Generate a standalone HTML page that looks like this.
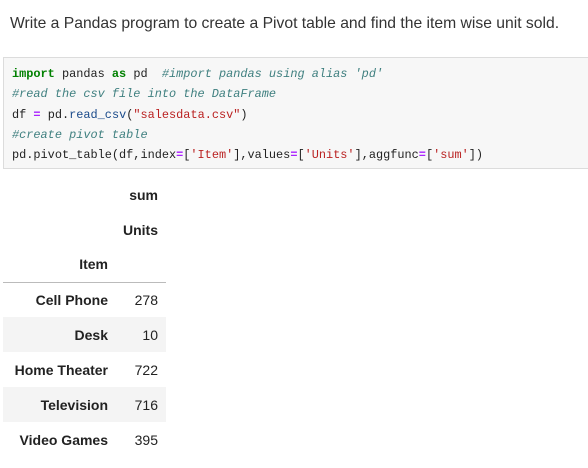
<!DOCTYPE html>
<html><head><style>
body{margin:0;width:588px;height:468px;background:#fff;font-family:"Liberation Sans",sans-serif;color:#222;overflow:hidden;position:relative}
.t{position:absolute;left:10px;top:15px;font-size:15.7px;color:#333}
.code{position:absolute;left:3px;top:57px;width:590px;height:112px;background:#f7f7f7;border:1px solid #dcdcdc;box-sizing:border-box;font-family:"Liberation Mono",monospace;font-size:11.9px;padding:6px 0 0 8px;line-height:20.3px;color:#222;white-space:pre}
.k{color:#008000;font-weight:bold}.c{color:#408080;font-style:italic}.s{color:#ba2121}.o{color:#aa22ff;font-weight:bold}.f{color:#1a4a8a}
table{position:absolute;left:3px;top:177px;border-collapse:collapse;font-size:14px}
td,th{height:35px;padding:0 8px 0 6px;text-align:right;box-sizing:border-box}
th{font-weight:bold}
tr.e td,tr.e th{background:#f4f4f4}
.b th{border-bottom:1.5px solid #bbb}
</style></head><body>
<div class="t">Write a Pandas program to create a Pivot table and find the item wise unit sold.</div>
<div class="code"><span class="k">import</span> pandas <span class="k">as</span> pd  <span class="c">#import pandas using alias 'pd'</span>
<span class="c">#read the csv file into the DataFrame</span>
df <span class="o">=</span> pd<span>.</span><span class="f">read_csv</span>(<span class="s">"salesdata.csv"</span>)
<span class="c">#create pivot table</span>
pd.pivot_table(df,index<span class="o">=</span>[<span class="s">'Item'</span>],values<span class="o">=</span>[<span class="s">'Units'</span>],aggfunc<span class="o">=</span>[<span class="s">'sum'</span>])</div>
<table>
<tr><th style="width:113px"></th><th style="width:50px">sum</th></tr>
<tr><th></th><th>Units</th></tr>
<tr class="b"><th>Item</th><th></th></tr>
<tr><th>Cell Phone</th><td>278</td></tr>
<tr class="e"><th>Desk</th><td>10</td></tr>
<tr><th>Home Theater</th><td>722</td></tr>
<tr class="e"><th>Television</th><td>716</td></tr>
<tr><th>Video Games</th><td>395</td></tr>
</table>
</body></html>
